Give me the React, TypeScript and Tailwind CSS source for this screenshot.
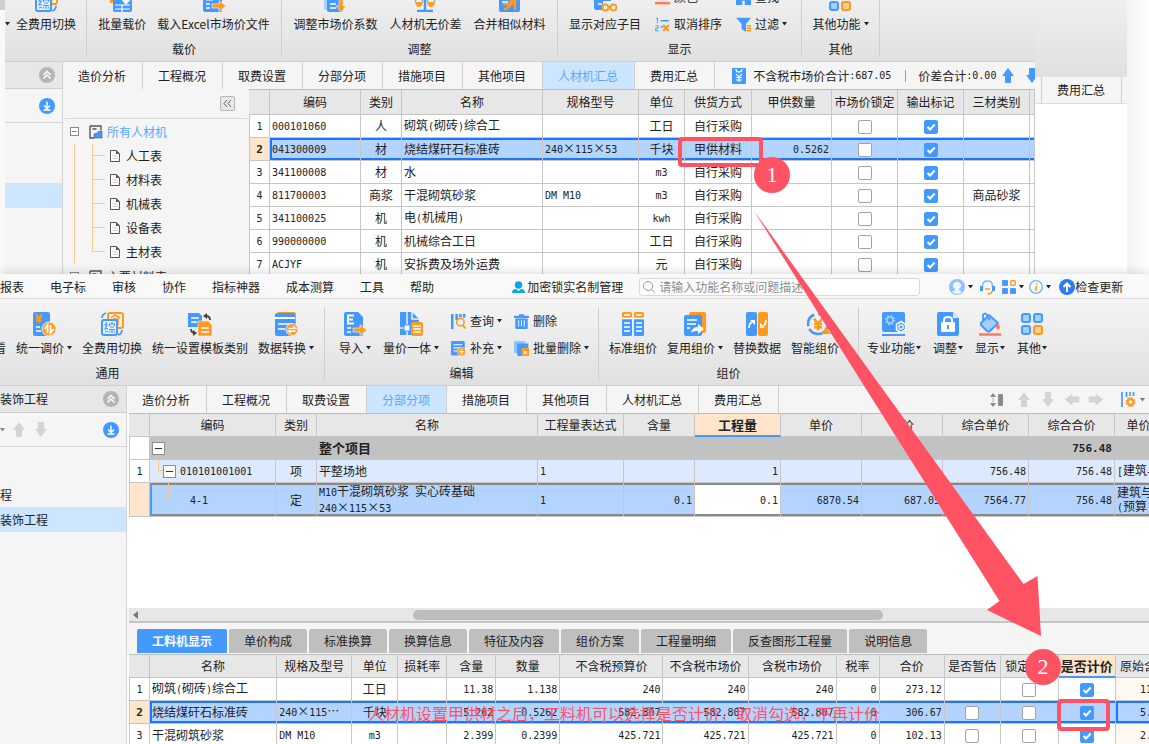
import { ReactNode } from 'react';
import clsx from 'clsx';

const B = '#4499ff';
const O = '#ff9a1f';

/* ---------- text ---------- */

// CJK keeps 12px, latin and digits are half as wide
function Mixed({ children, bold }: { children: string; bold?: boolean }) {
    const parts = children.split(/([\x20-\x7e]+)/).filter(Boolean);
    return (
        <>
            {parts.map((part, i) =>
                /^[\x20-\x7e]+$/.test(part) ? (
                    <span
                        key={i}
                        className={clsx("font-['DejaVu_Sans_Mono',monospace]", bold ? 'text-[11px]' : 'text-[10px]')}
                    >
                        {part}
                    </span>
                ) : (
                    part
                ),
            )}
        </>
    );
}

function Caret({ className = 'ml-[3px] text-[#222]' }: { className?: string }) {
    return (
        <svg width="5" height="4" viewBox="0 0 5 4" className={clsx('shrink-0', className)}>
            <path d="M0 0h5L2.500 3.500z" fill="currentColor" />
        </svg>
    );
}

/* ---------- icons ---------- */

function Svg({ children, size = 24 }: { children: ReactNode; size?: number }) {
    return (
        <svg width={size} height={size} viewBox="0 0 24 24" fill="none" className="shrink-0">
            {children}
        </svg>
    );
}

const yen = 'M-3-4 0 0 3-4M0 0V5M-3 0H3M-3 2.500H3';

const icons: Record<string, ReactNode> = {
    adjustPrice: (
        <>
            <rect x="1" y="0" width="17" height="24" rx="2" fill={B} />
            <path d={yen} transform="translate(7 6)" stroke={O} strokeWidth="1.800" />
            <path d="M4 15h4M4 19h5" stroke="#fff" strokeWidth="1.500" />
            <circle cx="17" cy="17" r="7" fill={O} stroke="#eee" />
            <path d="M15.500 21v-8l-3 4M18.500 13v8l3-4" stroke="#fff" strokeWidth="1.800" />
        </>
    ),
    feeSwitch: (
        <>
            <rect x="8" y="1" width="15" height="15" rx="2" stroke={O} strokeWidth="2" />
            <path d="m11 6 4-3 5 3M13 7h6M18 7v6" stroke={O} strokeWidth="1.500" />
            <rect x="2" y="8" width="15" height="15" rx="2" fill="#e9f3ff" stroke={B} strokeWidth="2" />
            <path
                d="m7 10-2 3h2l-2 4 3-.5M5 20l3-1M12 10v2M9.500 14v-2h5v2M10 15h4M9 17.500h6M12 17.500V21M10 19l-1 1.500M14 19l1 1.500"
                stroke={B}
                strokeWidth="1.200"
            />
            <path d="M2 6c0-3 1-4 4-5M22 18c0 3-1 4-4 5" stroke={B} strokeWidth="1.800" />
        </>
    ),
    template: (
        <>
            <path d="M0 1h11l3 3v11H0z" fill={B} />
            <path d="M3 6h8M3 10h6" stroke="#fff" strokeWidth="1.400" />
            <path d="M10 9h10l4 4v11H10z" fill={O} stroke="#eee" strokeWidth=".6" />
            <path d="M13 16h8M13 20h8" stroke="#fff" strokeWidth="1.400" />
            <path d="M18 4c3 0 4 1 4 4M3 17c0 2 1 4 4 4" stroke="#444" strokeWidth="1.800" />
            <path d="m15 4 4-3v6zM9 21l-4-3v6z" fill="#444" />
        </>
    ),
    convert: (
        <>
            <rect x="3" y="0" width="19" height="18" rx="2" fill={O} />
            <rect x="1" y="1" width="20" height="23" rx="2" fill={B} />
            <path d="M1 6h20" stroke="#fff" strokeWidth="2" />
            <path d="M4 12h14M4 17h7" stroke="#fff" strokeWidth="1.500" />
            <circle cx="18" cy="17.500" r="6" fill={O} stroke="#eee" />
            <path d="M14.500 16.300h7l-2.500-2.300M21.500 19h-7l2.500 2.300" stroke="#fff" strokeWidth="1.300" />
        </>
    ),
    importFile: (
        <>
            <path d="M1 2q0-2 2-2h12l5 5v17q0 2-2 2H3q-2 0-2-2z" fill={B} />
            <path d="M11 3.500H5v8h6M5 7.500h5" stroke="#fff" strokeWidth="2" />
            <path d="M4 16h4M4 20h4" stroke="#fff" strokeWidth="1.500" />
            <path d="M10 16h7v-3.500l7 5.500-7 5.500V20h-7z" fill={O} stroke="#eee" strokeWidth=".7" />
        </>
    ),
    quantityPrice: (
        <>
            <path d="M1 1q0-1 1-1h11l7 7v16H1z" fill={B} />
            <path d="M8 0v24M1 16h9M13 0v7h7" stroke="#e9f3ff" strokeWidth="1.500" />
            <rect x="5" y="13" width="6" height="6" fill="#fff" stroke={B} />
            <rect x="12" y="10" width="12" height="14" rx="2" fill={O} />
            <path d="M14 14h8M14 17h8M14 20h8" stroke="#fff" strokeWidth="1.400" />
        </>
    ),
    standard: (
        <>
            <rect x="1" y="0" width="10" height="6" rx="1.500" fill={O} />
            <rect x="13" y="0" width="10" height="6" rx="1.500" fill={O} />
            <rect x="1" y="6" width="10" height="18" rx="1.500" fill={B} />
            <rect x="13" y="6" width="10" height="18" rx="1.500" fill={B} />
            <path
                d="M1 6.500h10M13 6.500h10M3 3h6M15 3h6M3 11h6M15 11h6M3 15h6M15 15h6M3 19h6M15 19h6"
                stroke="#fff"
                strokeWidth="1.400"
            />
        </>
    ),
    reuse: (
        <>
            <rect x="6" y="0" width="17" height="21" rx="2" fill={O} />
            <rect x="1" y="3" width="18" height="21" rx="2" fill={B} />
            <path d="M4 8h10M4 12h9M4 16h3" stroke="#fff" strokeWidth="1.600" />
            <path d="M8 21c1-5 4-6 7-6v-3l6 5-6 5v-3c-3 0-5 0-7 2z" fill="#fff" />
        </>
    ),
    replace: (
        <>
            <rect x="1" y="0" width="11" height="24" rx="2" fill={B} />
            <rect x="13" y="0" width="10" height="24" rx="2" fill={O} />
            <path d="M4 16c0-4 1-5 3-6M21 8c0 4-1 5-3 6" stroke="#fff" strokeWidth="1.800" />
            <path d="M5 8h5v5zM15 16v-5l5 5z" fill="#fff" />
        </>
    ),
    smart: (
        <>
            <circle cx="11" cy="12" r="10" stroke={B} strokeWidth="2.500" strokeDasharray="26 3 14 4" />
            <path d={yen} transform="translate(11 12) scale(1.300)" stroke={O} strokeWidth="2" />
            <path d="m14 22 5-7 5 7z" fill={O} />
        </>
    ),
    pro: (
        <>
            <rect x="0" y="0" width="23" height="20" rx="2" fill={B} />
            <circle cx="8" cy="8" r="3" stroke="#a9d3ff" strokeWidth="1.500" />
            <circle cx="8" cy="8" r="4.500" stroke="#a9d3ff" strokeWidth="1.500" strokeDasharray="1.700 1.834" />
            <path d="m19 9.500 4.500 2.750v5.500L19 20.500l-4.500-2.750v-5.500z" fill={B} stroke="#fff" strokeWidth="1.500" />
            <circle cx="19" cy="15" r="2.200" stroke="#fff" strokeWidth="1.200" />
            <path d="M0 23h23" stroke={B} strokeWidth="2" />
        </>
    ),
    lock: (
        <>
            <path d="M1 2q0-2 2-2h14l6 6v16q0 2-2 2H3q-2 0-2-2z" fill={B} />
            <path d="M17 0v6h6z" fill="#d4e9ff" />
            <rect x="5" y="10" width="14" height="10" rx="1" fill="#fff" />
            <path d="M8 10V8q0-3 4-3t4 3v2" stroke="#fff" strokeWidth="2" />
            <path d="M12 13v4" stroke={B} strokeWidth="2" />
        </>
    ),
    bucket: (
        <>
            <path d="m3 11 8-8 9 8-8 8q-2 1-3 0l-6-6z" fill="#a5cfff" stroke={B} strokeWidth="2" strokeLinejoin="round" />
            <path d="M5 9V3q2-3 4 0l3 5" stroke={B} strokeWidth="1.800" />
            <path d="M20 12q-3 5 0 5t0-5z" fill="#ff7a59" stroke="#ff7a59" />
            <path d="M1 22.500h22" stroke="#ff7a59" strokeWidth="2.500" />
        </>
    ),
    grid: (
        <>
            <rect x="2" y="2" width="8" height="8" rx="2" fill="#a5cfff" stroke={B} strokeWidth="2" />
            <rect x="14" y="2" width="8" height="8" rx="2" fill="#a5cfff" stroke={B} strokeWidth="2" />
            <rect x="2" y="14" width="8" height="8" rx="2" fill="#a5cfff" stroke={B} strokeWidth="2" />
            <rect x="14" y="14" width="8" height="8" rx="2" fill="#ffcf91" stroke={O} strokeWidth="2" />
        </>
    ),
    loadPrice: (
        <>
            <rect x="0" y="8" width="12" height="7" fill={O} />
            <path d="M3 10h19v12q0 2-2 2H5q-2 0-2-2z" fill={B} />
            <path d="M5 17h15M5 21h15M12 17v7" stroke="#fff" strokeWidth="1.200" />
            <path d="m10 10 6 7 6-7z" fill="#fff" />
        </>
    ),
    coefficient: (
        <>
            <rect x="1" y="2" width="12" height="20" rx="2" fill="#a5cfff" />
            <path d="M4 0h16v22q0 2-2 2H6q-2 0-2-2z" fill={B} />
            <path d="M7 16h6M7 20h6" stroke="#fff" strokeWidth="1.600" />
            <path d="M16 10h4v8h3l-5 6-5-6h3z" fill={O} stroke="#eee" strokeWidth=".6" />
        </>
    ),
    balance: (
        <>
            <path d="M12 4v18M4 23h16" stroke={B} strokeWidth="2.500" />
            <path d="M2 14h8q-1 5-4 5t-4-5zM14 14h8q-1 5-4 5t-4-5z" fill={O} />
            <path d="m2 14 4-8 4 8M14 14l4-8 4 8" stroke={B} />
        </>
    ),
    merge: (
        <>
            <rect x="1" y="4" width="21" height="20" rx="2" fill={B} />
            <path d="M5 16h6l6-7M6 21h2l9-8v9" stroke={O} strokeWidth="2.500" />
            <path d="M4 14h6" stroke="#fff" strokeWidth="1.500" />
        </>
    ),
    showItems: (
        <>
            <path d="M1 2h15q2 0 2 2v9h-8v9H3q-2 0-2-2z" fill={B} />
            <path d="M5 16h4" stroke="#fff" strokeWidth="1.500" />
            <circle cx="12.500" cy="19.500" r="3" stroke={O} strokeWidth="2" />
            <circle cx="20.500" cy="19.500" r="3" stroke={O} strokeWidth="2" />
            <path d="M15.500 19h2" stroke={O} strokeWidth="2" />
        </>
    ),
    query: (
        <>
            <path d="M2 0v24M9 0v10M15 0v5M21 0v6" stroke={B} strokeWidth="4" />
            <circle cx="15" cy="13" r="6" fill="#f3f3f3" stroke={O} strokeWidth="2.500" />
            <path d="m19 18 4 5" stroke={O} strokeWidth="3" />
        </>
    ),
    supplement: (
        <>
            <rect x="0" y="0" width="22" height="23" rx="2" fill={B} />
            <path d="M4 6h14M4 11h10M4 16h6" stroke="#fff" strokeWidth="1.800" />
            <circle cx="17" cy="17" r="6.500" fill={O} stroke="#eee" />
            <path d="M17 13v8M13 17h8" stroke="#fff" strokeWidth="2" />
        </>
    ),
    trash: (
        <>
            <path d="M0 4.500h24M8 2h8" stroke={B} strokeWidth="3.500" />
            <path d="M2 7h20v15q0 2-2 2H4q-2 0-2-2z" fill={B} />
            <path d="M7.500 10v10M12 10v10M16.500 10v10" stroke="#fff" strokeWidth="1.500" />
        </>
    ),
    batchDelete: (
        <>
            <rect x="0" y="0" width="18" height="19" rx="2" fill="#8fc2ff" />
            <path d="M5 4h18v13l-5 7H7q-2 0-2-2z" fill={B} />
            <rect x="12" y="11" width="12" height="13" rx="1" fill={O} />
            <rect x="15" y="16" width="6" height="5" fill="#ffe0b8" />
        </>
    ),
    color: <path d="M0 21h24" stroke="#ff7a59" strokeWidth="4" />,
    find: <path d="M1 24V12h8v12M15 24V12h8v12M9 16h6" fill={B} stroke={B} strokeWidth="2" />,
    unsort: (
        <>
            <path d="M1 2h3v8M1 14h4v4H1v4h5" stroke={B} strokeWidth="1.500" />
            <path d="M9 6h13M9 16h4" stroke={B} strokeWidth="2.500" />
            <path d="m13 13 9 9M22 13l-9 9" stroke={O} strokeWidth="3.500" />
        </>
    ),
    filter: (
        <>
            <path d="M0 1h24l-8 10v13l-7-5v-8z" fill={B} />
            <path d="M17 14h7M17 18h7M17 22h7" stroke={O} strokeWidth="2.500" />
        </>
    ),
};

function Arrow({ rotate = '', color = 'text-[#d4d4d4]' }: { rotate?: string; color?: string }) {
    return (
        <svg width="12" height="15" viewBox="0 0 12 15" className={clsx('shrink-0', rotate, color)}>
            <path d="m6 0 6 8H9v7H3V8H0z" fill="currentColor" />
        </svg>
    );
}

function CollapseCircle() {
    return (
        <svg width="16" height="16" viewBox="0 0 16 16" fill="none">
            <circle cx="8" cy="8" r="8" fill="#b5b5b5" />
            <path d="m4.500 8 3.500-3.500L11.500 8M4.500 11.500 8 8l3.500 3.500" stroke="#fff" strokeWidth="1.500" />
        </svg>
    );
}

function DownloadCircle() {
    return (
        <svg width="16" height="16" viewBox="0 0 16 16" fill="none">
            <circle cx="8" cy="8" r="8" fill={B} />
            <path d="M8 3.500V10M5 7.500l3 3 3-3M4.500 12h7" stroke="#fff" strokeWidth="1.400" />
        </svg>
    );
}

/* ---------- ribbon ---------- */

function RibbonItem({ icon, label, caret, tight }: { icon?: string; label: string; caret?: boolean; tight?: boolean }) {
    return (
        <button className="flex shrink-0 flex-col items-center gap-1 whitespace-nowrap">
            <Svg>{icon && icons[icon]}</Svg>
            <span className="flex h-4 items-center leading-4">
                {label}
                {caret && <Caret className={tight ? 'ml-px' : 'ml-[3px]'} />}
            </span>
        </button>
    );
}

function SmallItem({ icon, label, caret }: { icon: string; label: string; caret?: boolean }) {
    return (
        <button className="flex h-4 items-center whitespace-nowrap leading-4">
            <Svg size={15}>{icons[icon]}</Svg>
            <span className="ml-1">{label}</span>
            {caret && <Caret />}
        </button>
    );
}

function SmallColumn({ children }: { children: ReactNode }) {
    return <div className="flex shrink-0 flex-col gap-[11px]">{children}</div>;
}

interface GroupProps {
    className: string;
    items: string;
    caption?: string;
    captionClass?: string;
    children: ReactNode;
}

function RibbonGroup({ className, items, caption, captionClass, children }: GroupProps) {
    return (
        <div className={clsx('flex shrink-0 flex-col justify-end gap-[9px] border-[#cfcfcf]', className)}>
            <div className={clsx('flex shrink-0 items-end', items)}>{children}</div>
            <div className={clsx('h-4 shrink-0 text-center leading-4', captionClass)}>{caption}</div>
        </div>
    );
}

/* ---------- tabs ---------- */

function ProjectTabs({ tabs, active }: { tabs: string[]; active: string }) {
    return (
        <>
            {tabs.map((tab) => (
                <button
                    key={tab}
                    className={clsx(
                        'shrink-0 whitespace-nowrap border-r border-[#cfcfcf] pl-[15px] pr-4',
                        tab === active ? 'bg-[#cce6ff] text-[#5aa5ff]' : 'bg-[#f5f5f5]',
                    )}
                >
                    {tab}
                </button>
            ))}
        </>
    );
}

/* ---------- grids ---------- */

function Check({ label, checked = false }: { label: string; checked?: boolean }) {
    return (
        <span className="inline-grid size-[14px] align-middle">
            <input
                type="checkbox"
                aria-label={label}
                defaultChecked={checked}
                className="peer col-start-1 row-start-1 size-[14px] appearance-none rounded-[2px] border border-[#a3a3a3] bg-white checked:border-[#4499ff] checked:bg-[#4499ff]"
            />
            <svg
                viewBox="0 0 14 14"
                fill="none"
                className="pointer-events-none col-start-1 row-start-1 hidden size-[14px] peer-checked:block"
            >
                <path d="m3.500 7 2.500 2.500 4.700-5" stroke="#fff" strokeWidth="2" />
            </svg>
        </span>
    );
}

function Cols({ widths }: { widths: number[] }) {
    return (
        <colgroup>
            {widths.map((w, i) => (
                <col key={i} style={{ width: w }} />
            ))}
        </colgroup>
    );
}

const blueLine = 'shadow-[inset_0_2px_0_#1a75ff,inset_0_-2px_0_#1a75ff]';
const blueLineLeft = 'shadow-[inset_2px_0_0_#1a75ff,inset_0_2px_0_#1a75ff,inset_0_-2px_0_#1a75ff]';
const greyLine = 'shadow-[inset_0_2px_0_#888,inset_0_-2px_0_#888]';
const cell = 'overflow-hidden whitespace-nowrap border-b border-r border-[#c6c6c6] px-[2px] py-0';

function HeadCell({ text, active, height = 'h-6' }: { text: string; active?: boolean; height?: string }) {
    return (
        <th
            className={clsx(
                'overflow-hidden whitespace-nowrap border-r border-t border-t-[#bdbdbd] border-r-[#c6c6c6] p-0 text-center',
                height,
                active
                    ? 'border-b-2 border-b-[#4499ff] bg-[#ffe5c9] text-[13px] font-bold'
                    : 'border-b border-b-[#c6c6c6] bg-[#e7e7e7] font-normal',
            )}
        >
            {text}
        </th>
    );
}

function NumCell({ n, selected }: { n: string; selected?: boolean }) {
    return (
        <td
            className={clsx(
                cell,
                "border-l pt-px text-center font-['DejaVu_Sans_Mono',monospace]",
                selected ? 'bg-[#ffe5c9] text-[11px] font-bold' : 'bg-white text-[10px]',
            )}
        >
            {n}
        </td>
    );
}

const materialHeads = ['', '编码', '类别', '名称', '规格型号', '单位', '供货方式', '甲供数量', '市场价锁定', '输出标记', '三材类别', ''];

const materials = [
    ['000101060', '人', '砌筑(砌砖)综合工', '', '工日', '自行采购', '', ''],
    ['041300009', '材', '烧结煤矸石标准砖', '240×115×53', '千块', '甲供材料', '0.5262', ''],
    ['341100008', '材', '水', '', 'm3', '自行采购', '', ''],
    ['811700003', '商浆', '干混砌筑砂浆', 'DM M10', 'm3', '自行采购', '', '商品砂浆'],
    ['341100025', '机', '电(机械用)', '', 'kwh', '自行采购', '', ''],
    ['990000000', '机', '机械综合工日', '', '工日', '自行采购', '', ''],
    ['ACJYF', '机', '安拆费及场外运费', '', '元', '自行采购', '', ''],
];

function MaterialGrid() {
    return (
        <table className="w-full table-fixed border-separate border-spacing-0 leading-[14px]">
            <Cols widths={[21, 91, 41, 141, 96, 46, 67, 80, 66, 66, 66, 5]} />
            <thead>
                <tr>
                    {materialHeads.map((h, i) => (
                        <HeadCell key={i} text={h} height="h-[26px]" />
                    ))}
                </tr>
            </thead>
            <tbody>
                {materials.map((row, r) => {
                    const [code, type, name, spec, unit, supply, qty, kind] = row;
                    const selected = r === 1;
                    const td = clsx(cell, selected ? clsx('bg-[#b3d4ff]', blueLine) : 'bg-white');
                    return (
                        <tr key={code} className="h-[23px]">
                            <NumCell n={String(r + 1)} selected={selected} />
                            <td className={clsx(cell, selected ? clsx('bg-[#b3d4ff]', blueLineLeft) : 'bg-white')}>
                                <Mixed>{code}</Mixed>
                            </td>
                            <td className={clsx(td, 'text-center')}>{type}</td>
                            <td className={td}><Mixed>{name}</Mixed></td>
                            <td className={td}><Mixed>{spec}</Mixed></td>
                            <td className={clsx(td, 'text-center')}><Mixed>{unit}</Mixed></td>
                            <td className={clsx(td, 'text-center')}>{supply}</td>
                            <td className={clsx(td, 'text-right')}><Mixed>{qty}</Mixed></td>
                            <td className={clsx(td, 'text-center')}><Check label="市场价锁定" /></td>
                            <td className={clsx(td, 'text-center')}><Check label="输出标记" checked /></td>
                            <td className={clsx(td, 'text-center')}>{kind}</td>
                            <td className={td} />
                        </tr>
                    );
                })}
            </tbody>
        </table>
    );
}

const itemHeads = ['', '编码', '类别', '名称', '工程量表达式', '含量', '工程量', '单价', '合价', '综合单价', '综合合价', '单价构成文件'];

function Minus() {
    return (
        <button aria-label="折叠" className="flex size-[13px] shrink-0 items-center justify-center border border-[#8d8d8d] bg-white">
            <span className="h-px w-[7px] bg-[#333]" />
        </button>
    );
}

function ItemGrid() {
    const grey = clsx(cell, 'bg-[#c2c2c2] border-[#bababa]');
    const light = clsx(cell, 'bg-[#dce9ff]');
    const sel = clsx(cell, 'bg-[#b3d4ff]', greyLine);
    return (
        <table className="w-full min-w-[1082px] table-fixed border-separate border-spacing-0 leading-[14px]">
            <Cols widths={[21, 126, 41, 221, 86, 71, 86, 81, 81, 86, 86, 96]} />
            <thead>
                <tr>
                    {itemHeads.map((h, i) => (
                        <HeadCell key={i} text={h} active={h === '工程量'} />
                    ))}
                </tr>
            </thead>
            <tbody>
                <tr className="h-[23px] text-[13px] font-bold">
                    <NumCell n="" />
                    <td className={grey}><Minus /></td>
                    <td className={grey} />
                    <td className={grey}>整个项目</td>
                    <td className={grey} />
                    <td className={grey} />
                    <td className={grey} />
                    <td className={grey} />
                    <td className={grey} />
                    <td className={grey} />
                    <td className={clsx(grey, 'text-right')}><Mixed bold>756.48</Mixed></td>
                    <td className={grey} />
                </tr>
                <tr className="h-[23px]">
                    <NumCell n="1" />
                    <td className={light}>
                        <div className="flex h-[22px] items-center pl-[6px]">
                            <span className="h-[11px] w-[5px] shrink-0 self-start border-b border-l border-[#f5c98c]" />
                            <Minus />
                            <span className="ml-1"><Mixed>010101001001</Mixed></span>
                        </div>
                    </td>
                    <td className={clsx(light, 'text-center')}>项</td>
                    <td className={light}>平整场地</td>
                    <td className={light}><Mixed>1</Mixed></td>
                    <td className={light} />
                    <td className={clsx(light, 'text-right')}><Mixed>1</Mixed></td>
                    <td className={light} />
                    <td className={light} />
                    <td className={clsx(light, 'text-right')}><Mixed>756.48</Mixed></td>
                    <td className={clsx(light, 'text-right')}><Mixed>756.48</Mixed></td>
                    <td className={light}><Mixed>[建筑与装饰]</Mixed></td>
                </tr>
                <tr className="h-[34px]">
                    <NumCell n="" selected />
                    <td className={clsx(cell, 'bg-[#b3d4ff] shadow-[inset_2px_0_0_#4499ff,inset_0_2px_0_#888,inset_0_-2px_0_#888]')}>
                        <div className="flex h-[33px] items-center pl-4">
                            <span className="h-[17px] w-4 shrink-0 self-start border-b border-l border-[#f5c98c]" />
                            <span className="ml-[6px]"><Mixed>4-1</Mixed></span>
                        </div>
                    </td>
                    <td className={clsx(sel, 'text-center')}>定</td>
                    <td className={sel}>
                        <Mixed>M10干混砌筑砂浆</Mixed>
                        <span className="ml-[6px]">实心砖基础</span>
                        <br />
                        <Mixed>240×115×53</Mixed>
                    </td>
                    <td className={sel}><Mixed>1</Mixed></td>
                    <td className={clsx(sel, 'text-right')}><Mixed>0.1</Mixed></td>
                    <td className={clsx(cell, greyLine, 'bg-white text-right')}><Mixed>0.1</Mixed></td>
                    <td className={clsx(sel, 'text-right')}><Mixed>6870.54</Mixed></td>
                    <td className={clsx(sel, 'text-right')}><Mixed>687.05</Mixed></td>
                    <td className={clsx(sel, 'text-right')}><Mixed>7564.77</Mixed></td>
                    <td className={clsx(sel, 'text-right')}><Mixed>756.48</Mixed></td>
                    <td className={sel}>
                        建筑与装饰
                        <br />
                        <Mixed>(预算)</Mixed>
                    </td>
                </tr>
            </tbody>
        </table>
    );
}

const detailHeads = ['', '名称', '规格及型号', '单位', '损耗率', '含量', '数量', '不含税预算价', '不含税市场价', '含税市场价', '税率', '合价', '是否暂估', '锁定数量', '是否计价', '原始含量'];

const details = [
    ['砌筑(砌砖)综合工', '', '工日', '', '11.38', '1.138', '240', '240', '240', '0', '273.12'],
    ['烧结煤矸石标准砖', '240×115⋯', '千块', '', '5.262', '0.5262', '582.807', '582.807', '582.807', '0', '306.67'],
    ['干混砌筑砂浆', 'DM M10', 'm3', '', '2.399', '0.2399', '425.721', '425.721', '425.721', '0', '102.13'],
];

function DetailGrid() {
    return (
        <table className="w-full min-w-[1044px] table-fixed border-separate border-spacing-0 leading-[14px]">
            <Cols widths={[21, 127, 75, 46, 49, 49, 64, 103, 85, 88, 43, 65, 56, 58, 57, 57]} />
            <thead>
                <tr>
                    {detailHeads.map((h, i) => (
                        <HeadCell key={i} text={h} active={h === '是否计价'} />
                    ))}
                </tr>
            </thead>
            <tbody>
                {details.map((row, r) => {
                    const selected = r === 1;
                    const td = clsx(cell, selected ? clsx('bg-[#b3d4ff]', blueLine) : 'bg-white');
                    return (
                        <tr key={row[0]} className="h-[23px]">
                            <NumCell n={String(r + 1)} selected={selected} />
                            {row.map((value, i) => (
                                <td
                                    key={i}
                                    className={clsx(
                                        cell,
                                        selected ? clsx('bg-[#b3d4ff]', i === 0 ? blueLineLeft : blueLine) : 'bg-white',
                                        i === 2 && 'text-center',
                                        i > 3 && 'text-right',
                                    )}
                                >
                                    <Mixed>{value}</Mixed>
                                </td>
                            ))}
                            <td className={clsx(td, 'text-center')}>{r > 0 && <Check label="是否暂估" />}</td>
                            <td className={clsx(td, 'text-center')}><Check label="锁定数量" /></td>
                            <td className={clsx(td, 'text-center')}><Check label="是否计价" checked /></td>
                            <td
                                className={clsx(
                                    cell,
                                    'text-right',
                                    selected ? clsx('bg-[#b3d4ff]', blueLineLeft) : 'bg-[#fff9f2]',
                                )}
                            >
                                <Mixed>{row[4]}</Mixed>
                            </td>
                        </tr>
                    );
                })}
            </tbody>
        </table>
    );
}

/* ---------- upper window ---------- */

function TreeRoot({ label, active }: { label: string; active?: boolean }) {
    return (
        <div className="flex h-[25px] items-center pl-[5px]">
            <span className="flex size-[9px] shrink-0 items-center justify-center border border-[#888] bg-white">
                {active && <span className="h-px w-[5px] bg-[#3aa0e8]" />}
            </span>
            <svg width="14" height="14" viewBox="0 0 14 14" fill="none" className="ml-[10px] shrink-0">
                <path d="M1 1h11v4M1 1v12h4M3.500 4h4" stroke="#555" strokeWidth="1.400" />
                <path d="M5 13V9l3-1 2-2h3v7z" fill={B} stroke="#555" strokeWidth=".6" />
            </svg>
            <span className={clsx('ml-1', active && 'text-[#5aa5ff]')}>{label}</span>
        </div>
    );
}

function MaterialTree() {
    const leaves = ['人工表', '材料表', '机械表', '设备表', '主材表'];
    return (
        <nav className="w-[186px] shrink-0 bg-[#f5f5f5] px-[2px]">
            <div className="flex h-[30px] items-center justify-end border-b border-[#d9d9d9] pr-3">
                <button
                    aria-label="收起"
                    className="flex size-[15px] items-center justify-center rounded-[2px] border border-[#b5b5b5] bg-[#e9e9e9]"
                >
                    <svg width="9" height="9" viewBox="0 0 9 9" fill="none">
                        <path d="M4 1 1 4.500 4 8M8 1 5 4.500 8 8" stroke="#666" />
                    </svg>
                </button>
            </div>
            <TreeRoot label="所有人材机" active />
            <ul className="ml-[9px] border-l border-[#f7cb90] pl-[17px]">
                {leaves.map((leaf, i) => (
                    <li key={leaf} className="flex h-6 items-center">
                        <span className="flex h-6 w-[13px] flex-col">
                            <span className="h-3 border-b border-l border-[#f7cb90]" />
                            {i < leaves.length - 1 && <span className="h-3 border-l border-[#f7cb90]" />}
                        </span>
                        <svg width="10" height="12" viewBox="0 0 10 12" fill="none" className="ml-[5px]">
                            <path d="M.5.500h6l3 3v8h-9z" fill="#fff" stroke="#555" />
                            <path d="M6 .5v3.500h3.500z" fill="#555" />
                            <path d="M2.500 6h5M2.500 8.500h5" stroke="#ccc" />
                        </svg>
                        <span className="ml-[6px]">{leaf}</span>
                    </li>
                ))}
            </ul>
            <TreeRoot label="主要材料表" />
        </nav>
    );
}

function UpperWindow() {
    return (
        <section className="flex h-[274px] shrink-0 overflow-hidden">
            <div className="w-[5px] shrink-0 bg-[#f9f9f9]">
                <div className="h-[10px] bg-[#cfcfcf]" />
            </div>

            <div className="flex min-w-0 flex-1 flex-col overflow-hidden">
                <div className="flex h-[62px] shrink-0 border-b border-[#cfcfcf] bg-linear-to-b from-[#efefef] to-[#e0e0e0] pb-1">
                    <RibbonGroup className="w-[82px] border-r" items="justify-between pr-[10px]">
                        <span className="flex h-4 items-center">
                            <Caret className="text-[#222]" />
                        </span>
                        <RibbonItem icon="feeSwitch" label="全费用切换" />
                    </RibbonGroup>
                    <RibbonGroup className="w-[195px] border-r" items="justify-center gap-[11px]" caption="载价">
                        <RibbonItem icon="loadPrice" label="批量载价" />
                        <RibbonItem icon="importFile" label="载入Excel市场价文件" />
                    </RibbonGroup>
                    <RibbonGroup className="w-[276px] border-r" items="justify-center gap-3" caption="调整">
                        <RibbonItem icon="coefficient" label="调整市场价系数" />
                        <RibbonItem icon="balance" label="人材机无价差" />
                        <RibbonItem icon="merge" label="合并相似材料" />
                    </RibbonGroup>
                    <RibbonGroup className="w-[244px] border-r" items="gap-[14px] pl-[11px]" caption="显示">
                        <RibbonItem icon="showItems" label="显示对应子目" />
                        <SmallColumn>
                            <SmallItem icon="color" label="颜色" caret />
                            <SmallItem icon="unsort" label="取消排序" />
                        </SmallColumn>
                        <SmallColumn>
                            <SmallItem icon="find" label="查找" />
                            <SmallItem icon="filter" label="过滤" caret />
                        </SmallColumn>
                    </RibbonGroup>
                    <RibbonGroup className="w-[78px] border-r" items="justify-center" caption="其他">
                        <RibbonItem icon="grid" label="其他功能" caret />
                    </RibbonGroup>
                </div>

                <div className="flex h-[27px] shrink-0 bg-[#f5f5f5]">
                    <div className="flex w-[58px] shrink-0 items-center justify-end border-b border-r border-[#cfcfcf] bg-[#e7e7e7] pr-[7px]">
                        <CollapseCircle />
                    </div>
                    <ProjectTabs
                        tabs={['造价分析', '工程概况', '取费设置', '分部分项', '措施项目', '其他项目', '人材机汇总', '费用汇总']}
                        active="人材机汇总"
                    />
                    <div className="ml-[17px] flex items-center whitespace-nowrap">
                        <svg width="14" height="16" viewBox="0 0 14 16" fill="none" className="mr-[7px]">
                            <rect width="14" height="16" rx="1" fill={B} />
                            <path d="M4 1q0 3 3 3t3-3M4 6l3 3 3-3M7 9v5M4 9.500h6M4 12h6" stroke="#fff" strokeWidth="1.200" />
                        </svg>
                        <Mixed>不含税市场价合计:687.05</Mixed>
                        <span className="ml-[14px] mr-3 h-3 w-px bg-[#8aa4c4]" />
                        <Mixed>价差合计:0.00</Mixed>
                        <span className="ml-[6px] flex gap-3">
                            <Arrow color="text-[#4499ff]" />
                            <Arrow color="text-[#4499ff]" rotate="rotate-180" />
                        </span>
                    </div>
                </div>

                <div className="flex flex-1">
                    <div className="w-[58px] shrink-0 border-r border-[#d4d4d4] bg-[#f5f5f5]">
                        <div className="flex h-[34px] items-center justify-end border-b border-[#d4d4d4] pr-[7px]">
                            <DownloadCircle />
                        </div>
                        <div className="mt-[60px] h-[25px] bg-[#cce6ff]" />
                    </div>
                    <MaterialTree />
                    <div className="min-w-0 flex-1">
                        <MaterialGrid />
                    </div>
                </div>
            </div>

            {/* window that peeks out behind */}
            <div className="w-[92px] shrink-0 bg-white">
                <div className="h-[77px] bg-linear-to-b from-[#efefef] to-[#e0e0e0]" />
                <div className="flex h-[27px] justify-center border-b border-[#dcdcdc] bg-[#f5f5f5]">
                    <button className="w-[81px] border-x border-[#cfcfcf]">费用汇总</button>
                </div>
            </div>
            <div className="w-[22px] shrink-0 bg-linear-to-r from-[#f3f3f3] to-white" />
        </section>
    );
}

/* ---------- lower window ---------- */

function MenuBar() {
    return (
        <div className="flex h-[25px] shrink-0 items-center border-b border-[#dcdcdc] bg-[#f9f9f9] pt-[2px]">
            <nav className="flex gap-[26px] whitespace-nowrap">
                {['报表', '电子标', '审核', '协作', '指标神器', '成本测算', '工具', '帮助'].map((m) => (
                    <button key={m}>{m}</button>
                ))}
            </nav>
            <button className="ml-[78px] flex items-center whitespace-nowrap">
                <svg width="13" height="13" viewBox="0 0 13 13" className="mr-[2px]">
                    <circle cx="6.500" cy="4" r="3.700" fill="#0aa6e8" />
                    <path d="M0 12q0-4 4-4l2.500 2L9 8q4 0 4 4z" fill="#0aa6e8" />
                </svg>
                加密锁实名制管理
            </button>
            <label className="ml-4 flex h-[18px] w-[281px] items-center rounded-[3px] border border-[#d9d9d9] bg-white pl-[3px]">
                <svg width="12" height="12" viewBox="0 0 12 12" fill="none" className="mr-1 shrink-0">
                    <circle cx="5" cy="5" r="4.500" stroke="#999" />
                    <path d="m8.500 8.500 3 3" stroke="#999" />
                </svg>
                <input
                    aria-label="搜索"
                    placeholder="请输入功能名称或问题描述"
                    className="min-w-0 flex-1 bg-transparent outline-none placeholder:text-[#8c8c8c]"
                />
            </label>
            <div className="ml-[29px] flex items-center whitespace-nowrap">
                <svg width="16" height="16" viewBox="0 0 16 16">
                    <circle cx="8" cy="8" r="8" fill="#8dc1ff" />
                    <path d="M4 8V5q4-5 8 0v3l-2 2v1l3 2q-5 4-10 0l3-2v-1z" fill="#eef6ff" />
                </svg>
                <Caret />
                <svg width="15" height="15" viewBox="0 0 15 15" fill="none" className="ml-[7px]">
                    <path d="M2.500 8V6q0-5 5-5t5 5v2" stroke="#7db8ff" strokeWidth="1.500" />
                    <path d="M0 6h3v5H0zM12 6h3v5h-3z" fill={B} />
                    <path d="M12.500 11q-1 3-5 3M5 9h5" stroke={O} strokeWidth="1.500" />
                </svg>
                <svg width="14" height="14" viewBox="0 0 14 14" className="ml-[7px]">
                    <rect width="6" height="6" rx="1" fill={B} />
                    <rect x="8.700" y=".7" width="4.600" height="4.600" rx="1" fill="#fff" stroke={O} strokeWidth="1.400" />
                    <rect y="8" width="6" height="6" rx="1" fill={B} />
                    <rect x="8" y="8" width="6" height="6" rx="1" fill={B} />
                </svg>
                <Caret />
                <svg width="14" height="14" viewBox="0 0 14 14" fill="none" className="ml-[5px]">
                    <circle cx="7" cy="7" r="6.300" stroke="#6fb0ff" strokeWidth="1.300" />
                    <path d="M7.700 3v1.500M7.500 6l-1 5" stroke={O} strokeWidth="1.600" />
                </svg>
                <Caret />
                <button className="ml-2 flex items-center">
                    <svg width="16" height="16" viewBox="0 0 16 16" fill="none">
                        <circle cx="8" cy="8" r="8" fill="#2f7bf0" />
                        <path d="M8 13V5M4.500 8 8 4.500 11.500 8" stroke="#fff" strokeWidth="2" />
                    </svg>
                    检查更新
                </button>
            </div>
        </div>
    );
}

function LowerRibbon() {
    return (
        <div className="flex h-[87px] shrink-0 border-b border-[#cfcfcf] bg-linear-to-b from-[#f5f5f5] to-[#e0e0e0] pb-1 pt-2">
            <RibbonGroup className="w-[325px] border-r" items="justify-end gap-[10px] pr-[10px]" caption="通用" captionClass="pr-[109px]">
                <RibbonItem label="查看" />
                <RibbonItem icon="adjustPrice" label="统一调价" caret />
                <RibbonItem icon="feeSwitch" label="全费用切换" />
                <RibbonItem icon="template" label="统一设置模板类别" />
                <RibbonItem icon="convert" label="数据转换" caret />
            </RibbonGroup>
            <RibbonGroup className="w-[274px] border-r" items="gap-3 pl-[14px]" caption="编辑">
                <RibbonItem icon="importFile" label="导入" caret />
                <RibbonItem icon="quantityPrice" label="量价一体" caret />
                <SmallColumn>
                    <SmallItem icon="query" label="查询" caret />
                    <SmallItem icon="supplement" label="补充" caret />
                </SmallColumn>
                <SmallColumn>
                    <SmallItem icon="trash" label="删除" />
                    <SmallItem icon="batchDelete" label="批量删除" caret />
                </SmallColumn>
            </RibbonGroup>
            <RibbonGroup className="w-[260px] border-r" items="gap-[10px] pl-[10px]" caption="组价">
                <RibbonItem icon="standard" label="标准组价" />
                <RibbonItem icon="reuse" label="复用组价" caret />
                <RibbonItem icon="replace" label="替换数据" />
                <RibbonItem icon="smart" label="智能组价" caret />
            </RibbonGroup>
            <RibbonGroup className="" items="gap-3 pl-2">
                <RibbonItem icon="pro" label="专业功能" caret tight />
                <RibbonItem icon="lock" label="调整" caret tight />
                <RibbonItem icon="bucket" label="显示" caret tight />
                <RibbonItem icon="grid" label="其他" caret tight />
            </RibbonGroup>
        </div>
    );
}

function ProjectPanel() {
    return (
        <aside className="w-[127px] shrink-0 border-r border-[#d4d4d4] bg-[#f5f5f5]">
            <div className="flex h-[27px] items-center justify-between border-b border-[#cfcfcf] bg-[#e7e7e7] pr-[7px]">
                装饰工程
                <CollapseCircle />
            </div>
            <div className="flex h-[34px] items-center border-b border-[#d4d4d4] pr-[7px]">
                <Caret className="text-[#888]" />
                <span className="ml-2 flex flex-1 gap-[10px]">
                    <Arrow />
                    <Arrow rotate="rotate-180" />
                </span>
                <DownloadCircle />
            </div>
            <div className="mt-[35px] h-[25px] leading-[25px]">程</div>
            <div className="h-[25px] bg-[#cce6ff] leading-[25px]">装饰工程</div>
        </aside>
    );
}

function LowerWindow() {
    const detailTabs = ['工料机显示', '单价构成', '标准换算', '换算信息', '特征及内容', '组价方案', '工程量明细', '反查图形工程量', '说明信息'];
    return (
        <section className="relative flex min-h-0 flex-1 flex-col overflow-hidden bg-white shadow-[0_0_10px_rgba(0,0,0,0.18)]">
            <MenuBar />
            <LowerRibbon />
            <div className="flex min-h-0 flex-1">
                <ProjectPanel />
                <div className="flex min-w-0 flex-1 flex-col bg-[#f5f5f5]">
                    <div className="flex h-[27px] shrink-0">
                        <ProjectTabs
                            tabs={['造价分析', '工程概况', '取费设置', '分部分项', '措施项目', '其他项目', '人材机汇总', '费用汇总']}
                            active="分部分项"
                        />
                        <div className="flex flex-1 items-center justify-end gap-3 pr-1">
                            <svg width="14" height="14" viewBox="0 0 14 14" className="mr-[2px]">
                                <path d="m3 0 3 4H0zM3 14l3-4H0zM2.500 5h1v1.500h-1zM2.500 7.500h1V9h-1z" fill="#8a8a8a" />
                                <rect x="8" y="1" width="5" height="12" rx="1" fill="#8a8a8a" />
                            </svg>
                            <Arrow />
                            <Arrow rotate="rotate-180" />
                            <Arrow rotate="-rotate-90" />
                            <Arrow rotate="rotate-90" />
                            <span className="flex items-center pl-[7px]">
                                <svg width="15" height="15" viewBox="0 0 15 15" fill="none">
                                    <path d="M1 0v15M5.500 0v5M9 0v4M12.500 0v4" stroke={B} strokeWidth="1.700" />
                                    <circle cx="9.500" cy="10" r="3" stroke={O} strokeWidth="2.400" />
                                    <circle cx="9.500" cy="10" r="4.500" stroke={O} strokeDasharray="2 1.500" />
                                </svg>
                                <Caret className="ml-1 text-[#777]" />
                            </span>
                        </div>
                    </div>

                    <div className="flex h-[195px] shrink-0 flex-col overflow-hidden bg-white pl-[2px]">
                        <ItemGrid />
                    </div>
                    <div className="ml-[2px] flex h-[15px] shrink-0 items-center border-b-2 border-[#c4c4c4] bg-[#e7e7e7]">
                        <svg width="5" height="8" viewBox="0 0 5 8" className="ml-1">
                            <path d="M5 0v8L0 4z" fill="#777" />
                        </svg>
                        <div className="ml-[27%] h-[10px] w-[46%] rounded-full bg-[#bdbdbd]" />
                    </div>

                    <div className="flex h-[31px] shrink-0 items-end gap-[2px] pb-px pl-[10px]">
                        {detailTabs.map((tab, i) => (
                            <button
                                key={tab}
                                className={clsx(
                                    'h-6 shrink-0 whitespace-nowrap rounded-t-[2px] px-[15px]',
                                    i === 0 ? 'bg-[#4499ff] font-bold text-white' : 'bg-[#bfbfbf]',
                                )}
                            >
                                {tab}
                            </button>
                        ))}
                    </div>
                    <div className="min-h-0 flex-1 overflow-hidden bg-white pl-[2px]">
                        <DetailGrid />
                    </div>
                </div>
            </div>
        </section>
    );
}

/* ---------- tutorial marks drawn over both windows ---------- */

function Badge({ n, className }: { n: string; className: string }) {
    return (
        <span
            className={clsx(
                "absolute flex size-9 items-center justify-center rounded-full bg-[#ff5263] font-['Liberation_Serif',serif] text-[22px] leading-none text-white",
                className,
            )}
        >
            {n}
        </span>
    );
}

function Annotations() {
    return (
        <div className="pointer-events-none absolute inset-0 overflow-hidden">
            <div className="absolute left-[678px] top-[137px] h-[30px] w-[85px] rounded-[4px] border-4 border-[#ff5263]" />
            <div className="absolute left-[1057px] top-[699px] h-8 w-[53px] rounded-[4px] border-4 border-[#ff5263]" />
            <svg width="300" height="440" viewBox="750 205 300 440" className="absolute left-[750px] top-[205px]">
                <path d="M754 211 1023.500 584 1037.500 576 1041 636 987 610 999.500 601z" fill="#ff5263" />
            </svg>
            <Badge n="1" className="left-[754px] top-[157px]" />
            <Badge n="2" className="left-[1025px] top-[649px]" />
            <p className="absolute left-[368px] top-[701px] whitespace-nowrap text-base leading-6 text-[#ff5263]">
                人材机设置甲供材之后，工料机可以选择是否计价，取消勾选，不再计价
            </p>
        </div>
    );
}

export default function App() {
    return (
        <main
            lang="zh-CN"
            className="relative flex h-screen w-full flex-col overflow-hidden bg-white font-['Noto_Sans_CJK_SC',sans-serif] text-[12px] text-[#222]"
        >
            <UpperWindow />
            <LowerWindow />
            <Annotations />
        </main>
    );
}
